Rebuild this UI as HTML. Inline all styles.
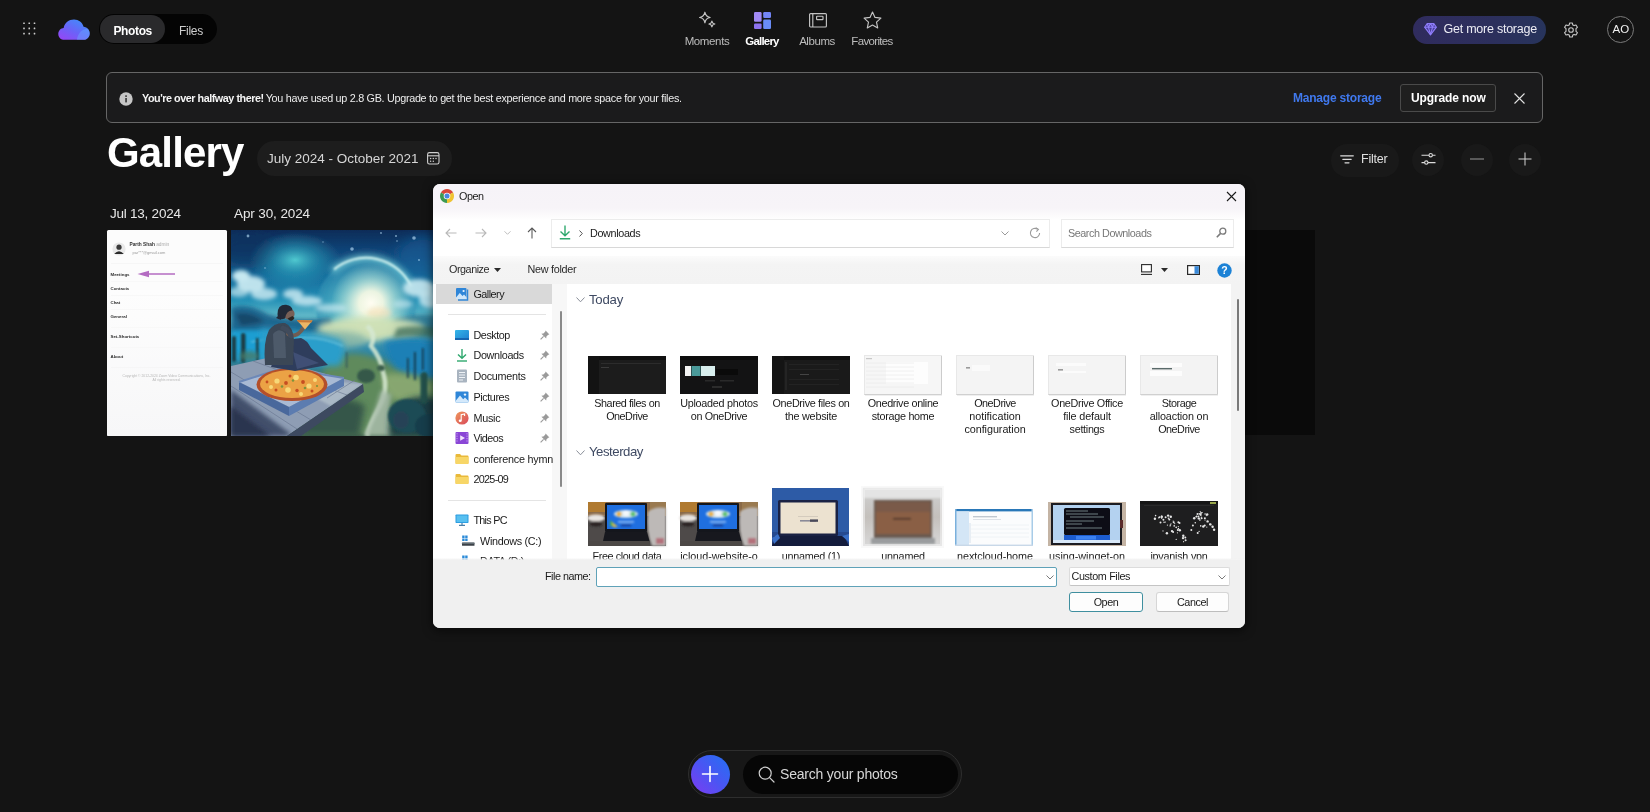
<!DOCTYPE html>
<html lang="en">
<head>
<meta charset="utf-8">
<title>Gallery - OneDrive</title>
<style>
*{box-sizing:border-box;margin:0;padding:0}
html,body{width:1650px;height:812px;overflow:hidden;background:#141414}
body{position:relative;will-change:transform;font-family:"Liberation Sans",sans-serif;color:#fff;-webkit-font-smoothing:antialiased}
.abs{position:absolute}
.t{position:absolute;white-space:nowrap;line-height:1}
svg{position:absolute;overflow:visible}
/* header */
#pill{left:99px;top:14px;width:118.4px;height:30px;border-radius:15px;background:#040404}
#pill .on{left:1.2px;top:1.2px;width:64.4px;height:27.6px;border-radius:14px;background:#2a2a2c}
.nav{font-size:11.5px;color:#bdbdbd;text-align:center;width:80px}
#gms{left:1413px;top:15.5px;width:133px;height:28px;border-radius:14px;background:linear-gradient(90deg,#302c5e,#2c2f5c 60%,#27345c)}
#avatar{left:1607.3px;top:15.7px;width:27px;height:27px;border-radius:50%;border:1.3px solid #7a7a7a}
/* banner */
#banner{left:106px;top:72px;width:1437px;height:51px;border:1px solid #666;border-radius:6px;background:#1b1b1c}
#upg{left:1400px;top:83.5px;width:96px;height:28px;border:1px solid #4a4a4a;border-radius:3px;background:#1f1f1f}
/* gallery */
#datepill{left:256.5px;top:141px;width:195.5px;height:35px;border-radius:17.5px;background:#1d1d1d}
.rb{border-radius:16px;background:#191919}

/* dialog */
#dlg{font-size:11px;color:#1a1a1a}
#dlg .t{color:#1a1a1a}
#dlg .d{font-size:11px}
.box{position:absolute;border:1px solid #e2e2e2;background:#fff}
.lbl{position:absolute;text-align:center;font-size:10.8px;line-height:13px;color:#1a1a1a;width:92px;white-space:nowrap}
.sb{position:absolute;left:40.5px;font-size:10.8px;line-height:1;white-space:nowrap;color:#1a1a1a}
.th{position:absolute;overflow:hidden}
</style>
</head>
<body>

<!-- ===== HEADER ===== -->
<svg class="abs" style="left:22px;top:21px" width="15" height="15" viewBox="0 0 15 15" fill="#cdcdcd"><rect x="1.2" y="1.4000000000000001" width="1.6" height="1.6" rx=".3"/><rect x="6.45" y="1.4000000000000001" width="1.6" height="1.6" rx=".3"/><rect x="11.7" y="1.4000000000000001" width="1.6" height="1.6" rx=".3"/><rect x="1.2" y="6.6000000000000005" width="1.6" height="1.6" rx=".3"/><rect x="6.45" y="6.6000000000000005" width="1.6" height="1.6" rx=".3"/><rect x="11.7" y="6.6000000000000005" width="1.6" height="1.6" rx=".3"/><rect x="1.2" y="11.799999999999999" width="1.6" height="1.6" rx=".3"/><rect x="6.45" y="11.799999999999999" width="1.6" height="1.6" rx=".3"/><rect x="11.7" y="11.799999999999999" width="1.6" height="1.6" rx=".3"/></svg>
<svg class="abs" style="left:57.5px;top:18.8px" width="32" height="21.4" viewBox="0 0 34 22">
<defs><linearGradient id="cl" x1="0.1" y1="1" x2="0.9" y2="0"><stop offset="0" stop-color="#9646f5"/><stop offset=".45" stop-color="#6a63f8"/><stop offset="1" stop-color="#3b93fa"/></linearGradient></defs>
<path d="M7 21.8 C3 21.8 0.3 19 0.3 15.5 C0.3 12 3 9.4 6 9.2 C7 4 11.5 0.3 17 0.3 C22 0.3 26 3.4 27.2 8 C31 8.4 33.7 11.4 33.7 15 C33.7 18.8 30.8 21.8 27 21.8 Z" fill="url(#cl)"/>
<path d="M20 21.8 C21 15 25 10.5 31.5 10 C33 11.4 33.7 13 33.7 15 C33.7 18.8 30.8 21.8 27 21.8 Z" fill="#6aa8ff" opacity=".45"/>
</svg>
<div class="abs" id="pill"><div class="abs on"></div></div>
<div class="t" style="left:113.5px;top:24.7px;font-size:12px;font-weight:bold;color:#fff"><span class="f" style="letter-spacing:-0.379px">Photos</span></div>
<div class="t" style="left:179px;top:24.7px;font-size:12px;color:#cdcdcd"><span class="f" style="letter-spacing:-0.269px">Files</span></div>

<div class="t nav" style="left:667px;top:35.7px"><span class="f" style="letter-spacing:-0.371px">Moments</span></div>
<div class="t nav" style="left:722px;top:35.7px;color:#fff;font-weight:bold"><span class="f" style="letter-spacing:-0.814px">Gallery</span></div>
<div class="t nav" style="left:777px;top:35.7px"><span class="f" style="letter-spacing:-0.443px">Albums</span></div>
<div class="t nav" style="left:832px;top:35.7px"><span class="f" style="letter-spacing:-0.666px">Favorites</span></div>

<div class="abs" id="gms"></div>
<div class="t" style="left:1443.5px;top:23.4px;font-size:12.5px;color:#ececf4"><span class="f" style="letter-spacing:-0.242px">Get more storage</span></div>
<div class="abs" id="avatar"></div>
<div class="t" style="left:1611.3px;top:24px;font-size:11.5px;color:#f0f0f0;width:19px;text-align:center">AO</div>

<!-- ===== BANNER ===== -->
<div class="abs" id="banner"></div>
<div class="t" style="left:142px;top:93px;font-size:10.8px;color:#f4f4f4;font-weight:bold"><span class="f" style="letter-spacing:-0.469px">You're over halfway there!</span></div>
<div class="t" style="left:265.7px;top:93px;font-size:10.8px;color:#ededed"><span class="f" style="letter-spacing:-0.295px">You have used up 2.8 GB. Upgrade to get the best experience and more space for your files.</span></div>
<div class="t" style="left:1293px;top:92px;font-size:12px;font-weight:bold;color:#4079ee"><span class="f" style="letter-spacing:-0.211px">Manage storage</span></div>
<div class="abs" id="upg"></div>
<div class="t" style="left:1411px;top:92px;font-size:12px;font-weight:bold;color:#fff"><span class="f" style="letter-spacing:-0.120px">Upgrade now</span></div>

<!-- ===== GALLERY HEAD ===== -->
<div class="t" style="left:107px;top:131.9px;font-size:42px;font-weight:bold;color:#fff"><span class="f" style="letter-spacing:-0.848px">Gallery</span></div>
<div class="abs" id="datepill"></div>
<div class="t" style="left:267px;top:152px;font-size:13.5px;color:#d6d6d6"><span class="f" style="letter-spacing:0.000px">July 2024 - October 2021</span></div>
<div class="abs rb" style="left:1331px;top:143.5px;width:68px;height:33px"></div>
<div class="t" style="left:1361px;top:153px;font-size:12.5px;color:#e0e0e0"><span class="f" style="letter-spacing:-0.230px">Filter</span></div>
<div class="abs rb" style="left:1412px;top:143.5px;width:32px;height:32px"></div>
<div class="abs rb" style="left:1461px;top:143.5px;width:32px;height:32px"></div>
<div class="abs rb" style="left:1508.5px;top:143.5px;width:32px;height:32px"></div>

<div class="t" style="left:110px;top:206.5px;font-size:13.5px;color:#e8e8e8"><span class="f" style="letter-spacing:-0.239px">Jul 13, 2024</span></div>
<div class="t" style="left:234px;top:206.5px;font-size:13.5px;color:#e8e8e8"><span class="f" style="letter-spacing:-0.109px">Apr 30, 2024</span></div>

<!-- PHOTOS -->
<div class="abs" id="ph1" style="left:106.5px;top:229.5px;width:120px;height:206px;background:#fcfcfc;border-radius:1.5px;overflow:hidden;font-size:4.6px;color:#555">
<div class="abs" style="left:0;top:60px;width:120px;height:146px;background:linear-gradient(#fdfdfd,#f7f7f8)"></div>
<svg style="left:5px;top:12px" width="14" height="14" viewBox="0 0 14 14"><circle cx="7" cy="7" r="6.6" fill="#e9e9e9"/><circle cx="7" cy="5.2" r="2.6" fill="#3a3a3a"/><path d="M2.2 12 Q7 6.4 11.8 12 Z" fill="#2a2a2a"/></svg>
<div class="t" style="left:23px;top:13.0px;font-size:4.8px;color:#333;font-weight:bold">Parth Shah <span style="font-weight:normal;color:#aaa">admin</span></div>
<div class="t" style="left:26px;top:21.0px;font-size:4px;color:#9a9a9a">par***@gmail.com</div>
<div class="abs" style="left:4px;top:33px;width:112px;height:1px;background:#f6f6f6"></div>
<div class="t" style="left:4px;top:43.0px;color:#2c2c2c;font-weight:bold;font-size:4.4px">Meetings</div>
<svg style="left:30px;top:40px" width="39" height="8" viewBox="0 0 39 8"><path d="M8 4 H38" stroke="#b46cc2" stroke-width="1.5"/><path d="M0.5 4 L12 0.8 V7.2 Z" fill="#b46cc2"/></svg>
<div class="t" style="left:4px;top:57.0px;color:#2c2c2c;font-weight:bold;font-size:4.4px">Contacts</div>
<div class="t" style="left:4px;top:71.0px;color:#2c2c2c;font-weight:bold;font-size:4.4px">Chat</div>
<div class="t" style="left:4px;top:85.0px;color:#2c2c2c;font-weight:bold;font-size:4.4px">General</div>
<div class="t" style="left:4px;top:105.0px;color:#2c2c2c;font-weight:bold;font-size:4.4px">Set-Shortcuts</div>
<div class="t" style="left:4px;top:125.0px;color:#2c2c2c;font-weight:bold;font-size:4.4px">About</div>
<div class="abs" style="left:4px;top:51px;width:112px;height:1px;background:#f8f8f8"></div>
<div class="abs" style="left:4px;top:65px;width:112px;height:1px;background:#f8f8f8"></div>
<div class="abs" style="left:4px;top:79px;width:112px;height:1px;background:#f8f8f8"></div>
<div class="abs" style="left:4px;top:97px;width:112px;height:1px;background:#f8f8f8"></div>
<div class="abs" style="left:4px;top:117px;width:112px;height:1px;background:#f8f8f8"></div>
<div class="abs" style="left:4px;top:137px;width:112px;height:1px;background:#f6f6f6"></div>
<div class="t" style="left:8px;top:145.0px;font-size:3.4px;color:#b8b8b8;width:104px;text-align:center">Copyright © 2012-2024 Zoom Video Communications, Inc.</div>
<div class="t" style="left:8px;top:149.5px;font-size:3.4px;color:#b8b8b8;width:104px;text-align:center">All rights reserved.</div>
</div>
<div class="abs" id="ph2" style="left:231px;top:229.5px;width:210px;height:206px;background:#1d5f80;overflow:hidden">
<svg style="left:0;top:0" width="210" height="206" viewBox="0 0 210 206">
<defs>
<linearGradient id="sky" x1="0" y1="0" x2="0" y2="1"><stop offset="0" stop-color="#0e2c58"/><stop offset=".1" stop-color="#104478"/><stop offset=".22" stop-color="#15699a"/><stop offset=".34" stop-color="#2390b6"/><stop offset=".43" stop-color="#6cc0cc"/><stop offset=".5" stop-color="#4a9ab0"/><stop offset=".6" stop-color="#2c86a8"/><stop offset=".75" stop-color="#3a6a68"/><stop offset="1" stop-color="#22383c"/></linearGradient>
<radialGradient id="glow1"><stop offset="0" stop-color="#56d6d8" stop-opacity=".9"/><stop offset=".5" stop-color="#2ea8c0" stop-opacity=".5"/><stop offset="1" stop-color="#2aa0b8" stop-opacity="0"/></radialGradient>
<radialGradient id="sun"><stop offset="0" stop-color="#fffdf2"/><stop offset=".3" stop-color="#f6f9e4" stop-opacity=".92"/><stop offset=".65" stop-color="#cfeedd" stop-opacity=".45"/><stop offset="1" stop-color="#c8ecdc" stop-opacity="0"/></radialGradient>
<radialGradient id="planet" cx=".5" cy=".55" r=".55"><stop offset="0" stop-color="#d4f0e0" stop-opacity=".9"/><stop offset=".55" stop-color="#58b4c4" stop-opacity=".75"/><stop offset="1" stop-color="#2c8cb2" stop-opacity=".6"/></radialGradient>
<filter id="f1" x="-20%" y="-20%" width="140%" height="140%"><feGaussianBlur stdDeviation="1.1"/></filter>
<filter id="f2" x="-30%" y="-30%" width="160%" height="160%"><feGaussianBlur stdDeviation="2"/></filter>
<filter id="f3" x="-30%" y="-30%" width="160%" height="160%"><feGaussianBlur stdDeviation="3"/></filter>
<filter id="f6" x="-40%" y="-40%" width="180%" height="180%"><feGaussianBlur stdDeviation="6"/></filter>
<filter id="f05"><feGaussianBlur stdDeviation="0.6"/></filter>
<clipPath id="hz"><rect x="0" y="0" width="210" height="92"/></clipPath>
</defs>
<g filter="url(#f05)">
<rect width="210" height="206" fill="url(#sky)"/>
<ellipse cx="16" cy="22" rx="30" ry="16" fill="#0c2a54" opacity=".55" filter="url(#f6)"/>
<ellipse cx="64" cy="30" rx="46" ry="28" fill="url(#glow1)"/>
<ellipse cx="192" cy="26" rx="26" ry="20" fill="#15609a" opacity=".55" filter="url(#f6)"/>
<g fill="#bfe6ff" opacity=".6" filter="url(#f05)"><circle cx="17" cy="6" r="1.4"/><circle cx="121" cy="19" r="1.8"/><circle cx="183" cy="8" r="1.8"/><circle cx="165" cy="6" r="1"/><circle cx="150" cy="3" r=".9"/><circle cx="166" cy="11" r=".8"/><circle cx="188" cy="30" r=".9"/><circle cx="34" cy="38" r=".8"/><circle cx="92" cy="12" r=".7"/></g>
<g clip-path="url(#hz)">
<circle cx="135" cy="78" r="50" fill="url(#planet)" filter="url(#f1)"/>
<path d="M101 41.5 A50 50 0 0 1 181 58" fill="none" stroke="#8fe4e4" stroke-width="7" filter="url(#f3)" opacity=".65"/>
<path d="M103 39.5 A50 50 0 0 1 180 56" fill="none" stroke="#e0fcf6" stroke-width="2" filter="url(#f1)"/>
</g>
<circle cx="140" cy="73" r="40" fill="url(#sun)"/>
<ellipse cx="148" cy="83" rx="12" ry="6" fill="#f8e0b8" opacity=".6" filter="url(#f2)"/>
<g filter="url(#f2)" fill="#c6e8f0">
<ellipse cx="10" cy="46" rx="9" ry="6"/><ellipse cx="20" cy="54" rx="14" ry="8" opacity=".95"/><ellipse cx="33" cy="64" rx="13" ry="6" opacity=".85"/><ellipse cx="8" cy="62" rx="10" ry="5" opacity=".7"/>
<ellipse cx="62" cy="64" rx="10" ry="5" opacity=".85"/><ellipse cx="76" cy="71" rx="15" ry="5" opacity=".85"/><ellipse cx="100" cy="78" rx="16" ry="4" opacity=".7"/>
<ellipse cx="188" cy="58" rx="16" ry="9" opacity=".9"/><ellipse cx="200" cy="70" rx="12" ry="8" opacity=".85"/><ellipse cx="172" cy="74" rx="10" ry="4" opacity=".6"/>
</g>
<g filter="url(#f2)"><path d="M0 78 Q16 72 36 84 Q60 92 100 88 L104 104 L0 104 Z" fill="#1a5e8a" opacity=".9"/><path d="M4 84 Q20 80 34 92 L10 96 Z" fill="#123e60" opacity=".8"/><path d="M164 90 Q186 82 210 86 V104 H154 Z" fill="#1f6a8a" opacity=".8"/></g>
<ellipse cx="140" cy="99" rx="54" ry="12" fill="#d2e2b6" filter="url(#f3)" opacity=".95"/>
<ellipse cx="106" cy="110" rx="30" ry="9" fill="#8ab8a8" filter="url(#f3)" opacity=".85"/>
<path d="M0 100 H34 Q46 110 44 130 H0 Z" fill="#1f9ed2" filter="url(#f2)"/><path d="M20 112 Q60 104 104 118" fill="none" stroke="#7cd0e4" stroke-width="1.500" opacity=".6" filter="url(#f1)"/>
<path d="M152 112 Q178 104 210 112 V148 Q184 152 162 140 Z" fill="#1a80b6" filter="url(#f3)"/>
<path d="M166 98 Q186 94 206 98 L204 108 Q182 104 162 108 Z" fill="#3a6a58" filter="url(#f2)" opacity=".75"/>
<path d="M98 126 Q140 116 168 142 Q196 150 210 150 V206 H66 Z" fill="#5e8a5c" filter="url(#f3)"/><path d="M30 98 Q80 100 110 110 Q118 122 108 136 H30 Z" fill="#2a9ecb" filter="url(#f3)"/><path d="M66 108 Q90 106 112 116" fill="none" stroke="#8ad8e8" stroke-width="1.500" opacity=".55" filter="url(#f1)"/>
<path d="M150 146 Q176 138 200 156 Q196 176 168 172 Q152 164 150 146 Z" fill="#8caa72" filter="url(#f3)" opacity=".9"/>
<path d="M76 176 Q110 160 134 176 L128 206 H70 Z" fill="#36564a" filter="url(#f3)"/>
<path d="M136 96 Q146 104 140 116 Q150 128 152 142 Q158 160 148 178 Q138 196 136 206" fill="none" stroke="#d6e8d2" stroke-width="4.5" filter="url(#f1)" opacity=".85"/>
<path d="M150 160 Q142 190 132 206 H160 Q158 186 160 164 Z" fill="#a8bcaa" filter="url(#f2)" opacity=".85"/>
<path d="M160 180 Q182 160 210 170 V206 H158 Z" fill="#1e3c44" filter="url(#f3)"/>
<g filter="url(#f1)"><ellipse cx="135" cy="146" rx="9" ry="7" fill="#34584a"/><ellipse cx="150" cy="138" rx="4" ry="3" fill="#3a5e4c"/><ellipse cx="176" cy="186" rx="19" ry="17" fill="#1d4c54"/><ellipse cx="198" cy="196" rx="14" ry="12" fill="#183e4c"/><ellipse cx="170" cy="190" rx="8" ry="9" fill="#2a4058" opacity=".7"/><rect x="189.500" y="142" width="7" height="32" rx="3.5" fill="#21504c"/><rect x="115" y="122" width="1.200" height="16" fill="#2a4a58"/><rect x="176" y="128" width="1.600" height="20" fill="#1a3a4c"/><rect x="183" y="122" width="1.800" height="28" fill="#1a3a4c"/><rect x="191" y="118" width="1.600" height="22" fill="#16324a"/></g>
<g fill="#1c3e44" filter="url(#f1)"><rect x="1" y="106" width="4" height="26" rx="2"/><rect x="10" y="103" width="4.500" height="30" rx="2"/><rect x="25" y="108" width="2.500" height="24"/></g>
<ellipse cx="18" cy="126" rx="10" ry="5" fill="#4a7a68" filter="url(#f2)" opacity=".8"/>
<path d="M0 136 L36 128 L132 154 L56 206 H0 Z" fill="#8e9db4"/>
<path d="M84 150 L132 154 L100 176 L70 160 Z" fill="#b4c2cc" opacity=".75" filter="url(#f1)"/>
<path d="M0 142 L80 190 M0 156 L66 199 M22 131 L116 165 M96 168 L124 150" stroke="#66748e" stroke-width="1" opacity=".6"/>
<path d="M0 160 L60 204 L56 206 H0 Z" fill="#34425e" opacity=".85" filter="url(#f2)"/>
<path d="M0 176 L40 206 H0 Z" fill="#2a3650" filter="url(#f2)"/>
<path d="M56 206 L132 154 L133 162 L70 206 Z" fill="#3c4a60"/>
<path d="M8 152 L52 138 L113 148 L58 177 Z" fill="#a9bad4"/>
<path d="M8 152 L58 177 V186 L8 160 Z" fill="#4a689c"/>
<path d="M58 177 L113 148 V156 L58 186 Z" fill="#5c7cb0"/>
<path d="M8 152 L52 138 L113 148" fill="none" stroke="#6c88b8" stroke-width="2"/>
<ellipse cx="61" cy="154.500" rx="35.500" ry="16.500" fill="#b4502a"/>
<ellipse cx="61" cy="154" rx="32" ry="14" fill="#eba244"/>
<g filter="url(#f05)"><g fill="#f7d878"><circle cx="46" cy="151" r="2.600"/><circle cx="65" cy="147.500" r="2.800"/><circle cx="78" cy="156" r="2.600"/><circle cx="57" cy="160" r="2.800"/><circle cx="84" cy="150" r="2"/><circle cx="40" cy="157" r="2"/><circle cx="70" cy="164" r="2"/></g><g fill="#c64e20"><circle cx="55" cy="153" r="1.900"/><circle cx="72" cy="152" r="1.900"/><circle cx="66" cy="160.500" r="1.700"/><circle cx="45" cy="160" r="1.500"/><circle cx="81" cy="161" r="1.500"/><circle cx="59" cy="146" r="1.500"/><circle cx="36" cy="152" r="1.400"/></g><g fill="#7c943a"><circle cx="51" cy="156.500" r="1.300"/><circle cx="74" cy="158" r="1.300"/><circle cx="62" cy="150.500" r="1.200"/><circle cx="86" cy="156" r="1.100"/></g></g>
<g filter="url(#f05)">
<path d="M46 120 Q58 108 70 108 Q76 110 80 118 L97 135 L64 141 L40 137 Z" fill="#2f3d5c"/>
<path d="M62 122 L88 133 L66 139 Z" fill="#44557a" opacity=".8"/>
<path d="M34 135 Q32 112 38 100 Q44 92 54 93 Q62 96 63 110 L62 135 Z" fill="#3a4656"/>
<path d="M42 104 Q48 97 54 103 L55 128 L43 128 Z" fill="#5a6878" opacity=".6"/>
<path d="M57 104 Q64 108 70 101 L73 97" fill="none" stroke="#705c52" stroke-width="3.800" stroke-linecap="round"/>
<path d="M52 98 Q58 100 60 106" fill="none" stroke="#3f4b5b" stroke-width="5" stroke-linecap="round"/>
<circle cx="58" cy="84" r="5.600" fill="#786056"/>
<path d="M46.500 84 Q46.500 74.500 55 74.800 Q61.500 76 61.500 80.500 Q55.500 80 54 88.500 Q46.500 91 46.500 84 Z" fill="#232938"/>
<path d="M45 88 L49 84 L50 90 Z" fill="#232938"/>
<path d="M56.500 88.500 Q60.500 93.500 63.500 88 L61.500 86 Z" fill="#2c2622"/>
<path d="M66 90 L81.500 90.500 L74 99.500 Z" fill="#ecb566"/><path d="M66 90 L81.500 90.500 L80.500 92.600 L67.200 92.200 Z" fill="#c87a38"/>
</g>
</g>
</svg>
</div>
<div class="abs" style="left:1240px;top:230px;width:75px;height:205px;background:#0a0a0a"></div>

<!-- DIALOG -->
<div class="abs" id="dlg" style="left:433px;top:184px;width:812px;height:444px;background:#fff;border-radius:7px;overflow:hidden;box-shadow:0 2px 10px 1px rgba(0,0,0,.55)">
<!--DLG-TITLE-->
<div class="abs" style="left:0;top:0;width:812px;height:36px;background:linear-gradient(#f6f3f8 0,#f7f4f8 24px,#fdfcfd 33px,#fff 36px)"></div>
<svg style="left:7px;top:5px" width="14" height="14" viewBox="0 0 14 14">
<circle cx="7" cy="7" r="7" fill="#e8ebe6"/>
<path d="M7 7 L0.94 3.5 A7 7 0 0 1 13.06 3.5 Z" fill="#d9473a"/>
<path d="M7 7 L13.06 3.5 A7 7 0 0 1 7 14 Z" fill="#f0c330"/>
<path d="M7 7 L7 14 A7 7 0 0 1 0.94 3.5 Z" fill="#3c9a52"/>
<circle cx="7" cy="7" r="3.3" fill="#f4f4f4"/>
<circle cx="7" cy="7" r="2.5" fill="#4a86e0"/>
</svg>
<div class="t" style="left:26px;top:7px;font-size:10.8px"><span class="f" style="letter-spacing:-0.430px">Open</span></div>
<svg style="left:793.5px;top:7.5px" width="9" height="9" viewBox="0 0 9 9"><path d="M0 0 L9 9 M9 0 L0 9" stroke="#1a1a1a" stroke-width="1.1" fill="none"/></svg>
<!--DLG-NAV-->
<svg style="left:12px;top:44px" width="12" height="10" viewBox="0 0 12 10"><path d="M11.5 5 H1 M5 1 L1 5 L5 9" stroke="#b9b9b9" stroke-width="1.1" fill="none"/></svg>
<svg style="left:42px;top:44px" width="12" height="10" viewBox="0 0 12 10"><path d="M0.5 5 H11 M7 1 L11 5 L7 9" stroke="#b9b9b9" stroke-width="1.1" fill="none"/></svg>
<svg style="left:70.5px;top:47px" width="7" height="4" viewBox="0 0 7 4"><path d="M0.5 0.3 L3.5 3.3 L6.5 0.3" stroke="#bdbdbd" stroke-width="1" fill="none"/></svg>
<svg style="left:94px;top:43px" width="10" height="12" viewBox="0 0 10 12"><path d="M5 11.5 V1 M1 5 L5 1 L9 5" stroke="#5a5a5a" stroke-width="1.1" fill="none"/></svg>
<div class="box" style="left:117.5px;top:34.5px;width:499px;height:29px;border-color:#ececec;border-bottom-color:#d8d8d8"></div>
<svg style="left:126px;top:41px" width="12" height="15" viewBox="0 0 12 15"><path d="M6 0.5 V10.5 M1.5 6.5 L6 10.8 L10.5 6.5" stroke="#2fa86e" stroke-width="1.4" fill="none"/><path d="M0.8 13.8 H11.2" stroke="#2fa86e" stroke-width="1.4"/></svg>
<svg style="left:145.5px;top:45.5px" width="4" height="7" viewBox="0 0 4 7"><path d="M0.5 0.5 L3.3 3.5 L0.5 6.5" stroke="#555" stroke-width="1" fill="none"/></svg>
<div class="t" style="left:157px;top:43.5px;font-size:10.8px"><span class="f" style="letter-spacing:-0.347px">Downloads</span></div>
<svg style="left:568px;top:46.5px" width="8" height="5" viewBox="0 0 8 5"><path d="M0.5 0.5 L4 4 L7.5 0.5" stroke="#9a9a9a" stroke-width="1" fill="none"/></svg>
<svg style="left:596px;top:43px" width="12" height="12" viewBox="0 0 12 12"><path d="M10.6 6 A4.6 4.6 0 1 1 8.6 2.2" stroke="#9a9a9a" stroke-width="1.1" fill="none"/><path d="M6.8 0.6 L9.4 2.4 L7.4 4.6" stroke="#9a9a9a" stroke-width="1.1" fill="none"/></svg>
<div class="abs" style="left:616px;top:38px;width:1px;height:22px;background:#ececec"></div>
<div class="box" style="left:627.5px;top:34.5px;width:173px;height:29px;border-color:#ececec;border-bottom-color:#d8d8d8"></div>
<div class="t" style="left:635px;top:43.5px;font-size:10.8px;color:#777"><span class="f" style="letter-spacing:-0.452px">Search Downloads</span></div>
<svg style="left:783px;top:43px" width="11" height="11" viewBox="0 0 11 11"><circle cx="6.8" cy="4.2" r="3" stroke="#7a7a7a" stroke-width="1.3" fill="none"/><path d="M4.6 6.4 L0.8 10.2" stroke="#7a7a7a" stroke-width="1.6"/></svg>
<!--DLG-TOOLBAR-->
<div class="abs" style="left:0;top:72px;width:812px;height:28px;background:linear-gradient(#fbfbfb,#f4f4f4 30%,#f3f3f3)"></div>
<div class="t" style="left:16px;top:80px;font-size:10.8px;color:#2a2a2a"><span class="f" style="letter-spacing:-0.464px">Organize</span></div>
<svg style="left:61px;top:83.5px" width="7" height="4" viewBox="0 0 7 4"><path d="M0 0 H7 L3.5 4 Z" fill="#2a2a2a"/></svg>
<div class="t" style="left:94.5px;top:80px;font-size:10.8px;color:#2a2a2a"><span class="f" style="letter-spacing:-0.281px">New folder</span></div>
<svg style="left:708px;top:80px" width="11" height="11" viewBox="0 0 11 11"><rect x="0.6" y="0.6" width="9.8" height="7.3" stroke="#2a2a2a" stroke-width="1.1" fill="#fff"/><path d="M0 10.4 H11" stroke="#2a2a2a" stroke-width="1.1"/></svg>
<svg style="left:728px;top:83.5px" width="7" height="4" viewBox="0 0 7 4"><path d="M0 0 H7 L3.5 4 Z" fill="#2a2a2a"/></svg>
<svg style="left:754px;top:80.5px" width="13" height="10" viewBox="0 0 13 10"><rect x="0.6" y="0.6" width="11.8" height="8.8" stroke="#2a2a2a" stroke-width="1.2" fill="#fff"/><rect x="7.5" y="1.2" width="4.3" height="7.6" fill="#3b8ad9"/></svg>
<svg style="left:784px;top:78.5px" width="15" height="15" viewBox="0 0 15 15"><circle cx="7.5" cy="7.5" r="7.2" fill="#1c82d6"/><text x="7.5" y="11.3" text-anchor="middle" font-family="Liberation Sans,sans-serif" font-weight="bold" font-size="10.5" fill="#fff">?</text></svg>
<!--DLG-SIDEBAR-->
<div class="abs" style="left:3px;top:100px;width:116px;height:20px;background:#d9d9d9"></div>
<div class="abs" style="left:15px;top:130px;width:98px;height:1px;background:#e4e4e4"></div>
<div class="abs" style="left:15px;top:316px;width:98px;height:1px;background:#e4e4e4"></div>
<div class="abs" style="left:119px;top:100px;width:15px;height:275px;background:#f7f7f7"></div>
<div class="abs" style="left:126.5px;top:127px;width:2px;height:176px;background:#8a8a8a;border-radius:1px"></div>
<svg style="left:22px;top:102.5px" width="14" height="14" viewBox="0 0 14 14"><rect x="1" y="1" width="10.5" height="11" rx="1" fill="#2f86d8"/><path d="M1 10.5 L4.8 6 L7.5 9 L9 7.6 L11.5 10.2 V12 H1 Z" fill="#cfe6fa"/><circle cx="8.6" cy="4" r="1.1" fill="#e8f3fd"/><path d="M12.6 2.5 V13 H3" stroke="#2f86d8" stroke-width="1.3" fill="none"/></svg>
<div class="sb" style="left:40.5px;top:104.5px"><span class="f" style="letter-spacing:-0.529px">Gallery</span></div>
<svg style="left:22px;top:144px" width="14" height="14" viewBox="0 0 14 14"><defs><linearGradient id="dk" x1="0" y1="0" x2="1" y2="1"><stop offset="0" stop-color="#35b6e8"/><stop offset="1" stop-color="#1e7fd0"/></linearGradient></defs><rect x="0" y="2" width="14" height="10" rx="1" fill="url(#dk)"/><rect x="0" y="10" width="14" height="2" fill="#1765b0"/></svg>
<div class="sb" style="left:40.5px;top:146.0px"><span class="f" style="letter-spacing:-0.458px">Desktop</span></div>
<svg style="left:107px;top:146px" width="10" height="10" viewBox="0 0 10 10"><path d="M5.6 0.6 L9.4 4.4 L8.2 4.8 L6.4 6.6 L6.2 8.6 L1.4 3.8 L3.4 3.6 L5.2 1.8 Z" fill="#9a9a9a"/><path d="M3.6 6.4 L0.6 9.4" stroke="#9a9a9a" stroke-width="1.1"/></svg>
<svg style="left:22px;top:164.4px" width="14" height="14" viewBox="0 0 14 14"><path d="M7 1 V10 M3 6.4 L7 10.3 L11 6.4" stroke="#2fa86e" stroke-width="1.4" fill="none"/><path d="M2 13 H12" stroke="#2fa86e" stroke-width="1.4"/></svg>
<div class="sb" style="left:40.5px;top:166.4px"><span class="f" style="letter-spacing:-0.347px">Downloads</span></div>
<svg style="left:107px;top:166.4px" width="10" height="10" viewBox="0 0 10 10"><path d="M5.6 0.6 L9.4 4.4 L8.2 4.8 L6.4 6.6 L6.2 8.6 L1.4 3.8 L3.4 3.6 L5.2 1.8 Z" fill="#9a9a9a"/><path d="M3.6 6.4 L0.6 9.4" stroke="#9a9a9a" stroke-width="1.1"/></svg>
<svg style="left:22px;top:185px" width="14" height="14" viewBox="0 0 14 14"><rect x="2" y="0.5" width="10" height="13" rx="1" fill="#a9b4c0"/><path d="M4 3.5 H10 M4 6 H10 M4 8.5 H10 M4 11 H8" stroke="#eef2f6" stroke-width="1"/></svg>
<div class="sb" style="left:40.5px;top:187.0px"><span class="f" style="letter-spacing:-0.279px">Documents</span></div>
<svg style="left:107px;top:187px" width="10" height="10" viewBox="0 0 10 10"><path d="M5.6 0.6 L9.4 4.4 L8.2 4.8 L6.4 6.6 L6.2 8.6 L1.4 3.8 L3.4 3.6 L5.2 1.8 Z" fill="#9a9a9a"/><path d="M3.6 6.4 L0.6 9.4" stroke="#9a9a9a" stroke-width="1.1"/></svg>
<svg style="left:22px;top:205.8px" width="14" height="14" viewBox="0 0 14 14"><rect x="0.5" y="1.5" width="13" height="11" rx="1" fill="#2f86d8"/><path d="M0.5 11 L5 5.6 L8.2 9.2 L10 7.6 L13.5 11 V12.5 H0.5 Z" fill="#d4e9fb"/><circle cx="10" cy="4.6" r="1.2" fill="#e8f3fd"/></svg>
<div class="sb" style="left:40.5px;top:207.8px"><span class="f" style="letter-spacing:-0.414px">Pictures</span></div>
<svg style="left:107px;top:207.8px" width="10" height="10" viewBox="0 0 10 10"><path d="M5.6 0.6 L9.4 4.4 L8.2 4.8 L6.4 6.6 L6.2 8.6 L1.4 3.8 L3.4 3.6 L5.2 1.8 Z" fill="#9a9a9a"/><path d="M3.6 6.4 L0.6 9.4" stroke="#9a9a9a" stroke-width="1.1"/></svg>
<svg style="left:22px;top:226.5px" width="14" height="14" viewBox="0 0 14 14"><defs><linearGradient id="mu" x1="0" y1="0" x2="1" y2="1"><stop offset="0" stop-color="#f09a5c"/><stop offset="1" stop-color="#d8475a"/></linearGradient></defs><circle cx="7" cy="7" r="6.6" fill="url(#mu)"/><path d="M6.2 9.6 V3.8 L9.6 3 V5" stroke="#fff" stroke-width="1.1" fill="none"/><ellipse cx="5.2" cy="9.7" rx="1.5" ry="1.2" fill="#fff"/></svg>
<div class="sb" style="left:40.5px;top:228.5px"><span class="f" style="letter-spacing:-0.281px">Music</span></div>
<svg style="left:107px;top:228.5px" width="10" height="10" viewBox="0 0 10 10"><path d="M5.6 0.6 L9.4 4.4 L8.2 4.8 L6.4 6.6 L6.2 8.6 L1.4 3.8 L3.4 3.6 L5.2 1.8 Z" fill="#9a9a9a"/><path d="M3.6 6.4 L0.6 9.4" stroke="#9a9a9a" stroke-width="1.1"/></svg>
<svg style="left:22px;top:246.9px" width="14" height="14" viewBox="0 0 14 14"><rect x="0.5" y="1" width="13" height="12" rx="1" fill="#8a46d6"/><path d="M5.2 4.2 L10 7 L5.2 9.8 Z" fill="#f0e4fb"/><path d="M2 2.2 V11.8 M12 2.2 V11.8" stroke="#c7a2f0" stroke-width="1" stroke-dasharray="1.2 1.2"/></svg>
<div class="sb" style="left:40.5px;top:248.9px"><span class="f" style="letter-spacing:-0.538px">Videos</span></div>
<svg style="left:107px;top:248.9px" width="10" height="10" viewBox="0 0 10 10"><path d="M5.6 0.6 L9.4 4.4 L8.2 4.8 L6.4 6.6 L6.2 8.6 L1.4 3.8 L3.4 3.6 L5.2 1.8 Z" fill="#9a9a9a"/><path d="M3.6 6.4 L0.6 9.4" stroke="#9a9a9a" stroke-width="1.1"/></svg>
<div class="abs" style="left:0;top:264px;width:121px;height:22px;overflow:hidden"><svg style="left:22px;top:3.6px" width="14" height="14" viewBox="0 0 14 14"><path d="M0.5 3 Q0.5 2 1.5 2 H5 L6.5 3.5 H12.5 Q13.5 3.5 13.5 4.5 V11 Q13.5 12 12.5 12 H1.5 Q0.5 12 0.5 11 Z" fill="#e9b93a"/><path d="M0.5 5 H13.5 V11 Q13.5 12 12.5 12 H1.5 Q0.5 12 0.5 11 Z" fill="#f7d667"/></svg>
<div class="sb" style="left:40.5px;top:5.6px"><span class="f" style="letter-spacing:-0.215px">conference hymn</span></div>
</div>
<svg style="left:22px;top:287.9px" width="14" height="14" viewBox="0 0 14 14"><path d="M0.5 3 Q0.5 2 1.5 2 H5 L6.5 3.5 H12.5 Q13.5 3.5 13.5 4.5 V11 Q13.5 12 12.5 12 H1.5 Q0.5 12 0.5 11 Z" fill="#e9b93a"/><path d="M0.5 5 H13.5 V11 Q13.5 12 12.5 12 H1.5 Q0.5 12 0.5 11 Z" fill="#f7d667"/></svg>
<div class="sb" style="left:40.5px;top:289.9px"><span class="f" style="letter-spacing:-0.718px">2025-09</span></div>
<svg style="left:22px;top:329px" width="14" height="14" viewBox="0 0 14 14"><rect x="0.5" y="1.5" width="13" height="8.6" rx="0.8" fill="#2a9be0"/><rect x="1.5" y="2.5" width="11" height="6.6" fill="#58c0f0"/><path d="M7 10 V12 M4 12.4 H10" stroke="#4a7fa8" stroke-width="1.2"/></svg>
<div class="sb" style="left:40.5px;top:331.0px"><span class="f" style="letter-spacing:-0.744px">This PC</span></div>
<svg style="left:28px;top:349.7px" width="14" height="14" viewBox="0 0 14 14"><rect x="1" y="8.6" width="12.5" height="3.2" rx="0.6" fill="#3c4248"/><rect x="1" y="8.6" width="12.5" height="1" fill="#7d8890"/><path d="M1.2 1.6 H3.6 V4 H1.2 Z M4.2 1.6 H6.6 V4 H4.2 Z M1.2 4.6 H3.6 V7 H1.2 Z M4.2 4.6 H6.6 V7 H4.2 Z" fill="#2a8ad8"/></svg>
<div class="sb" style="left:47px;top:351.7px"><span class="f" style="letter-spacing:-0.283px">Windows (C:)</span></div>
<svg style="left:28px;top:370.3px" width="14" height="14" viewBox="0 0 14 14"><rect x="1" y="8.6" width="12.5" height="3.2" rx="0.6" fill="#3c4248"/><rect x="1" y="8.6" width="12.5" height="1" fill="#7d8890"/><path d="M1.2 1.6 H3.6 V4 H1.2 Z M4.2 1.6 H6.6 V4 H4.2 Z M1.2 4.6 H3.6 V7 H1.2 Z M4.2 4.6 H6.6 V7 H4.2 Z" fill="#2a8ad8"/></svg>
<div class="sb" style="left:47px;top:372.3px"><span class="f" style="letter-spacing:-0.399px">DATA (D:)</span></div>
<!--DLG-CONTENT-->
<div class="abs" style="left:798px;top:100px;width:14px;height:275px;background:#f3f3f3"></div>
<div class="abs" style="left:803.5px;top:115px;width:2px;height:112px;background:#7a7a7a;border-radius:1px"></div>
<svg style="left:143px;top:113px" width="9" height="6" viewBox="0 0 9 6"><path d="M0.5 0.5 L4.5 4.8 L8.5 0.5" stroke="#8a8f99" stroke-width="1" fill="none"/></svg>
<div class="t" style="left:156px;top:108.5px;font-size:13.2px;color:#3f4a63"><span class="f" style="letter-spacing:-0.241px">Today</span></div>
<svg style="left:143px;top:265.5px" width="9" height="6" viewBox="0 0 9 6"><path d="M0.5 0.5 L4.5 4.8 L8.5 0.5" stroke="#8a8f99" stroke-width="1" fill="none"/></svg>
<div class="t" style="left:156px;top:261px;font-size:13.2px;color:#3f4a63"><span class="f" style="letter-spacing:-0.464px">Yesterday</span></div>
<svg style="left:155px;top:172px" width="78" height="38" viewBox="0 0 78 38"><rect width="78" height="38" fill="#1c1c1c"/><rect width="78" height="4" fill="#101010"/><rect width="11" height="38" fill="#131313"/><rect x="13" y="7" width="60" height="1" fill="#2c2c2c"/><rect x="13" y="11" width="8" height="1" fill="#3a3a3a"/></svg>
<svg style="left:247px;top:172px" width="78" height="38" viewBox="0 0 78 38"><rect width="78" height="38" fill="#131314"/><rect width="78" height="4" fill="#0d0d0d"/><rect x="5" y="10" width="6" height="10" fill="#f2f2f2"/><rect x="11.5" y="10" width="9" height="10" fill="#4a9a9a"/><rect x="21" y="10" width="14" height="10" fill="#d8eeee"/><rect x="36" y="13" width="22" height="6" fill="#0a0a0a"/><rect x="25" y="24" width="10" height="1.5" fill="#2a2a2a"/><rect x="40" y="24" width="14" height="1.5" fill="#2a2a2a"/><rect x="32" y="30" width="10" height="2" fill="#2c2c2c"/></svg>
<svg style="left:339px;top:172px" width="78" height="38" viewBox="0 0 78 38"><rect width="78" height="38" fill="#1a1a1a"/><rect width="78" height="4" fill="#0f0f0f"/><rect width="12" height="38" fill="#141414"/><rect x="13" y="6" width="2" height="28" fill="#2a2a2a" opacity=".7"/><rect x="28" y="18" width="9" height="1" fill="#444"/><rect x="17" y="8" width="50" height="0.6" fill="#2a2a2a"/><rect x="17" y="13" width="50" height="0.6" fill="#2a2a2a"/><rect x="17" y="23" width="50" height="0.6" fill="#2a2a2a"/><rect x="17" y="28" width="50" height="0.6" fill="#2a2a2a"/></svg>
<svg style="left:431px;top:170.5px" width="78" height="40" viewBox="0 0 78 40"><rect width="78" height="40" fill="#f6f6f6"/><rect x="0.5" y="0.5" width="77" height="39" fill="none" stroke="#e8e8e8"/><path d="M0.5 39.500 H77.500 V1" fill="none" stroke="#cccccc" stroke-width="1"/><path d="M1 40.300 H78" fill="none" stroke="#e6e6e6" stroke-width="0.8"/><rect x="2" y="3" width="6" height="1.2" fill="#c8c8c8"/><rect x="22" y="7" width="42" height="22" fill="#fdfdfd"/><path d="M2 8 H50 M2 12 H50 M2 16 H50 M2 20 H50 M2 24 H50 M2 28 H50 M2 32 H50" stroke="#ececec" stroke-width="0.8"/></svg>
<svg style="left:523px;top:170.5px" width="78" height="40" viewBox="0 0 78 40"><rect width="78" height="40" fill="#f4f4f4"/><rect x="0.5" y="0.5" width="77" height="39" fill="none" stroke="#e8e8e8"/><path d="M0.5 39.500 H77.500 V1" fill="none" stroke="#cccccc" stroke-width="1"/><path d="M1 40.300 H78" fill="none" stroke="#e6e6e6" stroke-width="0.8"/><rect x="10" y="12" width="4" height="1.6" fill="#9a9a9a"/><rect x="16" y="10" width="18" height="6" fill="#fafafa"/></svg>
<svg style="left:615px;top:170.5px" width="78" height="40" viewBox="0 0 78 40"><rect width="78" height="40" fill="#f4f4f4"/><rect x="0.5" y="0.5" width="77" height="39" fill="none" stroke="#e8e8e8"/><path d="M0.5 39.500 H77.500 V1" fill="none" stroke="#cccccc" stroke-width="1"/><path d="M1 40.300 H78" fill="none" stroke="#e6e6e6" stroke-width="0.8"/><rect x="10" y="14" width="5" height="1.6" fill="#9a9a9a"/><rect x="8" y="8" width="30" height="3" fill="#fbfbfb"/><rect x="12" y="16" width="26" height="2" fill="#fbfbfb"/></svg>
<svg style="left:707px;top:170.5px" width="78" height="40" viewBox="0 0 78 40"><rect width="78" height="40" fill="#f3f3f3"/><rect x="0.5" y="0.5" width="77" height="39" fill="none" stroke="#e8e8e8"/><path d="M0.5 39.500 H77.500 V1" fill="none" stroke="#cccccc" stroke-width="1"/><path d="M1 40.300 H78" fill="none" stroke="#e6e6e6" stroke-width="0.8"/><rect x="12" y="13" width="20" height="1.4" fill="#5a6a6a"/><rect x="10" y="8" width="32" height="4" fill="#fcfcfc"/><rect x="10" y="16" width="32" height="5" fill="#fcfcfc"/></svg>
<div class="lbl" style="left:148px;top:212.7px"><span class="f" style="letter-spacing:-0.429px">Shared files on</span><br><span class="f" style="letter-spacing:-0.489px">OneDrive</span></div>
<div class="lbl" style="left:240px;top:212.7px"><span class="f" style="letter-spacing:-0.270px">Uploaded photos</span><br><span class="f" style="letter-spacing:-0.375px">on OneDrive</span></div>
<div class="lbl" style="left:332px;top:212.7px"><span class="f" style="letter-spacing:-0.342px">OneDrive files on</span><br><span class="f" style="letter-spacing:-0.239px">the website</span></div>
<div class="lbl" style="left:424px;top:212.7px"><span class="f" style="letter-spacing:-0.343px">Onedrive online</span><br><span class="f" style="letter-spacing:-0.294px">storage home</span></div>
<div class="lbl" style="left:516px;top:212.7px"><span class="f" style="letter-spacing:-0.489px">OneDrive</span><br><span class="f" style="letter-spacing:0.006px">notification</span><br><span class="f" style="letter-spacing:-0.048px">configuration</span></div>
<div class="lbl" style="left:608px;top:212.7px"><span class="f" style="letter-spacing:-0.321px">OneDrive Office</span><br><span class="f" style="letter-spacing:-0.127px">file default</span><br><span class="f" style="letter-spacing:-0.302px">settings</span></div>
<div class="lbl" style="left:700px;top:212.7px"><span class="f" style="letter-spacing:-0.490px">Storage</span><br><span class="f" style="letter-spacing:-0.149px">alloaction on</span><br><span class="f" style="letter-spacing:-0.489px">OneDrive</span></div>
<svg style="left:155px;top:317.5px" width="78" height="44" viewBox="0 0 78 44"><defs><filter id="b1"><feGaussianBlur stdDeviation="0.8"/></filter></defs>
<rect width="78" height="44" fill="#6b645f"/>
<rect width="78" height="14" fill="#8a6a48"/><rect x="0" y="0" width="18" height="10" fill="#b07a30"/><rect x="62" y="0" width="16" height="16" fill="#9a7a50"/>
<path d="M0 14 H78 V44 H0 Z" fill="#4e4a49"/>
<g filter="url(#b1)"><ellipse cx="8" cy="16" rx="9" ry="3.6" fill="#e8e4e0"/><ellipse cx="8" cy="22" rx="6" ry="2.4" fill="#2a2220"/><path d="M60 10 Q66 4 78 6 V44 H64 Q58 30 60 10 Z" fill="#bdb9b7"/><rect x="68" y="36" width="8" height="6" fill="#b05060" opacity=".7"/></g>
<rect x="17" y="1" width="42" height="29" rx="1" fill="#14161c"/><rect x="19" y="3" width="38" height="24" fill="#1f6fe0"/>
<g filter="url(#b1)"><ellipse cx="38" cy="12" rx="12" ry="4" fill="#d8e8f0"/><circle cx="31" cy="12" r="2.6" fill="#e8b040"/><circle cx="45" cy="12" r="2.6" fill="#58c070"/><circle cx="38" cy="11" r="3" fill="#f4f8fc"/><path d="M22 18 L28 24 L22 24 Z" fill="#40b050"/><path d="M24 20 L30 25 L25 25 Z" fill="#e8c040"/><rect x="30" y="19" width="16" height="1.6" fill="#9cc4f4"/><rect x="33" y="22.5" width="10" height="1.8" fill="#123a90"/></g>
<path d="M17 30 H59 L61.500 39 H15 Z" fill="#17181e"/><rect x="0" y="39" width="62" height="5" fill="#4c4846"/></svg>
<svg style="left:247px;top:317.5px" width="78" height="44" viewBox="0 0 78 44"><defs><filter id="b2"><feGaussianBlur stdDeviation="0.8"/></filter></defs>
<rect width="78" height="44" fill="#6b645f"/>
<rect width="78" height="14" fill="#8a6a48"/><rect x="0" y="0" width="18" height="10" fill="#b07a30"/><rect x="62" y="0" width="16" height="16" fill="#9a7a50"/>
<path d="M0 14 H78 V44 H0 Z" fill="#4e4a49"/>
<g filter="url(#b2)"><ellipse cx="8" cy="16" rx="9" ry="3.6" fill="#e8e4e0"/><ellipse cx="8" cy="22" rx="6" ry="2.4" fill="#2a2220"/><path d="M60 10 Q66 4 78 6 V44 H64 Q58 30 60 10 Z" fill="#bdb9b7"/><rect x="68" y="36" width="8" height="6" fill="#b05060" opacity=".7"/></g>
<rect x="17" y="1" width="42" height="29" rx="1" fill="#14161c"/><rect x="19" y="3" width="38" height="24" fill="#1f6fe0"/>
<g filter="url(#b2)"><ellipse cx="38" cy="12" rx="12" ry="4" fill="#d8e8f0"/><circle cx="31" cy="12" r="2.6" fill="#e8b040"/><circle cx="45" cy="12" r="2.6" fill="#58c070"/><circle cx="38" cy="11" r="3" fill="#f4f8fc"/><rect x="30" y="19" width="16" height="1.6" fill="#9cc4f4"/><rect x="33" y="22.5" width="10" height="1.8" fill="#123a90"/></g>
<path d="M17 30 H59 L61.500 39 H15 Z" fill="#17181e"/><rect x="0" y="39" width="62" height="5" fill="#4c4846"/></svg>
<svg style="left:339px;top:304px" width="77" height="58" viewBox="0 0 77 58"><defs><filter id="b3"><feGaussianBlur stdDeviation="0.7"/></filter></defs><rect width="77" height="58" fill="#2d5ba6"/><rect y="44" width="77" height="14" fill="#264a90"/>
<rect x="6" y="12" width="60" height="36" rx="1.5" fill="#1a2244"/><g filter="url(#b3)"><rect x="8.5" y="14.5" width="55" height="31" fill="#ece2d0"/><rect x="28" y="32" width="16" height="1.6" fill="#8a8a98"/><rect x="38" y="31.4" width="8" height="2.4" fill="#4a4a5a"/><rect x="26" y="28" width="20" height="0.8" fill="#cfc6b8"/></g>
<path d="M2 48 H72 L77 58 H0 Z" fill="#141c3c"/><path d="M0 50 L6 46 L8 50 L2 56 Z" fill="#3a70c8"/><path d="M70 48 L77 46 V54 Z" fill="#3a70c8"/></svg>
<svg style="left:430px;top:304px" width="79" height="58" viewBox="0 0 79 58"><defs><filter id="b4"><feGaussianBlur stdDeviation="1.2"/></filter><linearGradient id="g4" x1="0" y1="0" x2="0" y2="1"><stop offset="0" stop-color="#cfd0d0"/><stop offset=".5" stop-color="#c4c0bc"/><stop offset="1" stop-color="#d8d8d8"/></linearGradient></defs>
<rect width="79" height="58" fill="url(#g4)"/><g filter="url(#b4)"><rect x="0" y="0" width="79" height="10" fill="#e4e4e4"/><rect x="11" y="12" width="58" height="38" fill="#6a5a50"/><rect x="13" y="14" width="54" height="32" fill="#8a5e44"/><rect x="13" y="14" width="54" height="10" fill="#7a5a48"/><rect x="30" y="30" width="18" height="1.4" fill="#3a2a20"/><rect x="8" y="50" width="64" height="6" fill="#9a9c9e"/></g>
<rect x="0" y="0" width="79" height="58" fill="none" stroke="#f4f4f4" stroke-width="4" opacity=".55"/></svg>
<svg style="left:522px;top:324.5px" width="78" height="37" viewBox="0 0 78 37"><rect width="78" height="37" fill="#fbfcfd"/><rect width="78" height="2.4" fill="#2a78b8"/><rect x="0" y="2.4" width="14" height="34.6" fill="#d4e6f6"/><rect x="0" y="0" width="1.5" height="37" fill="#7ab0dc"/><rect x="76.5" y="0" width="1.5" height="37" fill="#a8cce8"/><rect x="0" y="35.6" width="78" height="1.4" fill="#c8d8e8"/><rect x="18" y="7" width="24" height="1.4" fill="#c0c8d0"/><rect x="18" y="10" width="28" height="1" fill="#dde2e8"/><path d="M16 16 H74 M16 20 H74 M16 24 H74 M16 28 H74" stroke="#eef1f4" stroke-width="0.8"/><rect x="14" y="14" width="2" height="20" fill="#e8eef4"/></svg>
<svg style="left:614.5px;top:317.5px" width="78" height="44" viewBox="0 0 78 44"><defs><filter id="b5"><feGaussianBlur stdDeviation="0.6"/></filter></defs><rect width="78" height="44" fill="#c4b4a4"/><rect x="3" y="1" width="71" height="42" fill="#1c1c22"/><rect x="5" y="3" width="67" height="37" fill="#b4d2f0"/>
<g filter="url(#b5)"><rect x="16" y="6" width="46" height="27" rx="1.5" fill="#0c1016"/><path d="M18 9 H40 M18 12 H50 M22 15 H56 M18 19 H46 M18 22 H34 M18 26 H54" stroke="#8a949c" stroke-width="0.8"/><rect x="16" y="33" width="46" height="6" fill="#1c5cd0"/><rect x="28" y="34" width="20" height="3.6" fill="#3a80f0"/><rect x="5" y="38" width="67" height="3" fill="#d8e8f8"/></g><rect x="72" y="18" width="3" height="8" fill="#5a2a2a"/></svg>
<svg style="left:706.5px;top:316.5px" width="78" height="45" viewBox="0 0 78 45"><rect width="78" height="45" fill="#1e1e1f"/><rect width="78" height="3" fill="#161616"/><rect x="70" y="1" width="6" height="2" fill="#9aa84a"/><rect x="4" y="4" width="70" height="0.6" fill="#333"/><circle cx="25.5" cy="21.0" r="0.6" fill="#e6e6e6"/><circle cx="33.7" cy="21.2" r="1.0" fill="#e6e6e6"/><circle cx="15.6" cy="14.6" r="0.8" fill="#e6e6e6"/><circle cx="33.2" cy="20.0" r="0.6" fill="#e6e6e6"/><circle cx="27.4" cy="24.1" r="0.6" fill="#e6e6e6"/><circle cx="28.4" cy="17.2" r="0.8" fill="#e6e6e6"/><circle cx="21.6" cy="15.1" r="0.6" fill="#e6e6e6"/><circle cx="21.7" cy="17.1" r="0.8" fill="#e6e6e6"/><circle cx="38.4" cy="21.3" r="1.0" fill="#e6e6e6"/><circle cx="20.5" cy="21.4" r="1.0" fill="#e6e6e6"/><circle cx="18.6" cy="16.8" r="0.6" fill="#e6e6e6"/><circle cx="19.5" cy="16.2" r="1.0" fill="#e6e6e6"/><circle cx="34.7" cy="22.6" r="0.6" fill="#e6e6e6"/><circle cx="21.8" cy="15.8" r="1.2" fill="#e6e6e6"/><circle cx="28.1" cy="14.6" r="1.2" fill="#e6e6e6"/><circle cx="24.1" cy="21.3" r="0.8" fill="#e6e6e6"/><circle cx="25.6" cy="16.2" r="1.0" fill="#e6e6e6"/><circle cx="14.9" cy="17.7" r="1.2" fill="#e6e6e6"/><circle cx="23.0" cy="29.9" r="0.6" fill="#e6e6e6"/><circle cx="23.4" cy="18.8" r="1.0" fill="#e6e6e6"/><circle cx="31.0" cy="22.8" r="0.6" fill="#e6e6e6"/><circle cx="29.3" cy="18.6" r="1.0" fill="#e6e6e6"/><circle cx="32.0" cy="30.1" r="1.2" fill="#e6e6e6"/><circle cx="30.1" cy="24.9" r="0.6" fill="#e6e6e6"/><circle cx="38.3" cy="25.5" r="0.6" fill="#e6e6e6"/><circle cx="39.8" cy="29.3" r="1.2" fill="#e6e6e6"/><circle cx="33.1" cy="30.9" r="1.0" fill="#e6e6e6"/><circle cx="38.4" cy="27.6" r="0.8" fill="#e6e6e6"/><circle cx="30.4" cy="24.0" r="0.8" fill="#e6e6e6"/><circle cx="34.2" cy="24.9" r="0.8" fill="#e6e6e6"/><circle cx="26.9" cy="32.3" r="1.2" fill="#e6e6e6"/><circle cx="37.8" cy="29.1" r="1.0" fill="#e6e6e6"/><circle cx="39.5" cy="22.1" r="1.0" fill="#e6e6e6"/><circle cx="30.8" cy="15.7" r="1.2" fill="#e6e6e6"/><circle cx="36.2" cy="26.4" r="0.8" fill="#e6e6e6"/><circle cx="37.4" cy="31.8" r="0.6" fill="#e6e6e6"/><circle cx="56.7" cy="15.5" r="1.0" fill="#e6e6e6"/><circle cx="61.6" cy="17.2" r="1.0" fill="#e6e6e6"/><circle cx="59.3" cy="12.8" r="0.8" fill="#e6e6e6"/><circle cx="60.2" cy="10.5" r="0.6" fill="#e6e6e6"/><circle cx="54.2" cy="17.2" r="1.2" fill="#e6e6e6"/><circle cx="58.8" cy="17.4" r="1.2" fill="#e6e6e6"/><circle cx="61.0" cy="13.9" r="0.6" fill="#e6e6e6"/><circle cx="66.3" cy="14.6" r="0.6" fill="#e6e6e6"/><circle cx="61.3" cy="16.1" r="0.6" fill="#e6e6e6"/><circle cx="57.5" cy="13.0" r="1.0" fill="#e6e6e6"/><circle cx="60.8" cy="14.0" r="0.8" fill="#e6e6e6"/><circle cx="60.3" cy="13.5" r="1.0" fill="#e6e6e6"/><circle cx="67.2" cy="13.5" r="1.2" fill="#e6e6e6"/><circle cx="67.6" cy="20.4" r="1.2" fill="#e6e6e6"/><circle cx="58.6" cy="15.4" r="0.8" fill="#e6e6e6"/><circle cx="64.9" cy="17.2" r="1.0" fill="#e6e6e6"/><circle cx="55.9" cy="15.8" r="0.6" fill="#e6e6e6"/><circle cx="64.7" cy="24.5" r="1.0" fill="#e6e6e6"/><circle cx="65.0" cy="19.0" r="0.6" fill="#e6e6e6"/><circle cx="62.2" cy="11.6" r="0.6" fill="#e6e6e6"/><circle cx="61.0" cy="12.1" r="1.0" fill="#e6e6e6"/><circle cx="65.1" cy="13.0" r="0.8" fill="#e6e6e6"/><circle cx="52.9" cy="24.6" r="1.0" fill="#e6e6e6"/><circle cx="55.3" cy="21.8" r="0.8" fill="#e6e6e6"/><circle cx="59.9" cy="19.1" r="0.8" fill="#e6e6e6"/><circle cx="59.1" cy="30.4" r="0.6" fill="#e6e6e6"/><circle cx="63.3" cy="25.5" r="1.2" fill="#e6e6e6"/><circle cx="57.7" cy="32.1" r="1.0" fill="#e6e6e6"/><circle cx="51.3" cy="29.1" r="1.0" fill="#e6e6e6"/><circle cx="60.7" cy="24.9" r="0.8" fill="#e6e6e6"/><circle cx="45.6" cy="39.3" r="1.0" fill="#e6e6e6"/><circle cx="43.6" cy="40.7" r="0.6" fill="#e6e6e6"/><circle cx="36.2" cy="38.4" r="0.6" fill="#e6e6e6"/><circle cx="43.0" cy="37.1" r="1.2" fill="#e6e6e6"/><circle cx="43.3" cy="34.7" r="1.2" fill="#e6e6e6"/><circle cx="45.3" cy="36.6" r="1.0" fill="#e6e6e6"/><circle cx="74.1" cy="28.8" r="1.2" fill="#e6e6e6"/><circle cx="66.8" cy="26.1" r="0.6" fill="#e6e6e6"/><circle cx="69.8" cy="23.2" r="0.8" fill="#e6e6e6"/><circle cx="72.6" cy="25.7" r="1.2" fill="#e6e6e6"/><circle cx="70.4" cy="23.4" r="1.2" fill="#e6e6e6"/></svg>
<div class="lbl" style="left:148px;top:365.5px"><span class="f" style="letter-spacing:-0.409px">Free cloud data</span></div>
<div class="lbl" style="left:240px;top:365.5px"><span class="f" style="letter-spacing:-0.026px">icloud-website-o</span></div>
<div class="lbl" style="left:332px;top:365.5px"><span class="f" style="letter-spacing:-0.256px">unnamed (1)</span></div>
<div class="lbl" style="left:424px;top:365.5px"><span class="f" style="letter-spacing:-0.204px">unnamed</span></div>
<div class="lbl" style="left:516px;top:365.5px"><span class="f" style="letter-spacing:-0.073px">nextcloud-home</span></div>
<div class="lbl" style="left:608px;top:365.5px"><span class="f" style="letter-spacing:-0.022px">using-winget-on</span></div>
<div class="lbl" style="left:700px;top:365.5px"><span class="f" style="letter-spacing:-0.236px">ipvanish vpn</span></div>
<!--DLG-BOTTOM-->
<div class="abs" style="left:0;top:373.6px;width:812px;height:70.4px;background:linear-gradient(rgba(240,240,240,0) 0,rgba(240,240,240,.7) 1.200px,#f0f0f0 2.400px)"></div>
<div class="t" style="left:112px;top:387px;font-size:10.8px"><span class="f" style="letter-spacing:-0.481px">File name:</span></div>
<div class="box" style="left:162.5px;top:382.5px;width:461.5px;height:20px;border-color:#5fa2b8;border-radius:2px"></div>
<svg style="left:613px;top:391px" width="8" height="5" viewBox="0 0 8 5"><path d="M0.5 0.5 L4 4 L7.5 0.5" stroke="#7a7a7a" stroke-width="1" fill="none"/></svg>
<div class="box" style="left:635.5px;top:383px;width:161px;height:18.5px;border-color:#dcdcdc;border-bottom-color:#c4c4c4;border-radius:2px"></div>
<div class="t" style="left:638.5px;top:387px;font-size:10.8px"><span class="f" style="letter-spacing:-0.367px">Custom Files</span></div>
<svg style="left:785px;top:391px" width="8" height="5" viewBox="0 0 8 5"><path d="M0.5 0.5 L4 4 L7.5 0.5" stroke="#7a7a7a" stroke-width="1" fill="none"/></svg>
<div class="box" style="left:636px;top:408.3px;width:73.5px;height:19.7px;border-color:#3f8f9f;border-radius:3px;background:#fdfdfd"></div>
<div class="t" style="left:636.5px;top:413px;width:73px;text-align:center;font-size:10.8px"><span class="f" style="letter-spacing:-0.430px">Open</span></div>
<div class="box" style="left:722.8px;top:408.3px;width:73.2px;height:19.7px;border-color:#d6d6d6;border-bottom-color:#bdbdbd;border-radius:3px;background:#fdfdfd"></div>
<div class="t" style="left:723px;top:413px;width:73px;text-align:center;font-size:10.8px"><span class="f" style="letter-spacing:-0.435px">Cancel</span></div>
</div>

<!-- BOTTOM BAR -->
<div class="abs" id="bbar" style="left:687.5px;top:750px;width:274px;height:48px;border-radius:24px;background:#171717;border:1px solid #2e2e2e"></div>
<div class="abs" style="left:743px;top:755px;width:215px;height:39px;border-radius:20px;background:#060606"></div>
<div class="abs" style="left:690.5px;top:754.5px;width:39px;height:39px;border-radius:50%;background:linear-gradient(45deg,#7440f2 10%,#4a55f3 50%,#2a6cf2 90%)"></div>
<div class="t" style="left:780px;top:767px;font-size:14px;color:#d8d8d8"><span class="f" style="letter-spacing:-0.211px">Search your photos</span></div>

<!-- header icons -->
<svg style="left:697px;top:9px" width="20" height="20" viewBox="0 0 20 20" fill="none" stroke="#c4c4c4" stroke-width="1.15" stroke-linejoin="round">
<path d="M7.9 3.2 Q8.6 7.8 13.2 8.500 Q8.6 9.2 7.9 13.8 Q7.2 9.2 2.6 8.500 Q7.2 7.8 7.9 3.2 Z"/>
<path d="M14.9 12 Q15.3 14.6 17.9 15 Q15.3 15.4 14.9 18 Q14.500 15.4 11.9 15 Q14.500 14.6 14.9 12 Z"/>
</svg>
<svg style="left:754px;top:11.5px" width="17" height="17" viewBox="0 0 17 17">
<rect x="0" y="0" width="7.6" height="9.8" rx="1.2" fill="#a18af5"/>
<rect x="9.2" y="0" width="7.8" height="6" rx="1.2" fill="#7385f7"/>
<rect x="0" y="11.4" width="7.6" height="5.6" rx="1.2" fill="#8d72f0"/>
<rect x="9.2" y="7.6" width="7.8" height="9.4" rx="1.2" fill="#6a8df8"/>
</svg>
<svg style="left:808.5px;top:12.5px" width="18" height="15" viewBox="0 0 18 15" fill="none" stroke="#c4c4c4" stroke-width="1.15">
<rect x="0.6" y="0.6" width="16.8" height="13.4" rx="1"/>
<path d="M3.8 0.6 V14"/>
<rect x="7.6" y="3.2" width="6.4" height="3.4" rx="0.6"/>
</svg>
<svg style="left:863px;top:10.5px" width="19" height="18" viewBox="0 0 19 18" fill="none" stroke="#c4c4c4" stroke-width="1.15" stroke-linejoin="round">
<path d="M9.5 1 L12 6.4 L17.9 7.1 L13.5 11.1 L14.7 16.9 L9.5 14 L4.3 16.9 L5.5 11.1 L1.1 7.1 L7 6.4 Z"/>
</svg>
<svg style="left:1423.5px;top:23px" width="13" height="12.5" viewBox="0 0 13 12.5" fill="none" stroke="#8f7dfa" stroke-width="1.1" stroke-linejoin="round">
<path d="M3.2 0.6 H9.8 L12.4 4.2 L6.5 11.8 L0.6 4.2 Z" fill="#6a56e8" fill-opacity=".45"/>
<path d="M0.6 4.2 H12.4 M4.4 4.2 L6.5 11.6 L8.6 4.2 M3.2 0.6 L4.4 4.2 L6.5 0.6 L8.6 4.2 L9.8 0.6"/>
</svg>
<svg style="left:1563px;top:21.5px" width="16" height="16" viewBox="0 0 16 16" fill="none" stroke="#c8c8c8" stroke-width="1.1" stroke-linejoin="round">
<circle cx="8" cy="8" r="2.3"/>
<path d="M6.7 1 H9.3 L9.8 2.9 L11.1 3.6 L13 3 L14.4 5.3 L13 6.7 V8.3 V9.3 L14.4 10.7 L13 13 L11.1 12.4 L9.8 13.1 L9.3 15 H6.7 L6.2 13.1 L4.9 12.4 L3 13 L1.6 10.7 L3 9.3 V6.7 L1.6 5.3 L3 3 L4.9 3.6 L6.2 2.9 Z"/>
</svg>
<!-- banner icons -->
<svg style="left:119px;top:91.5px" width="14" height="14" viewBox="0 0 14 14"><circle cx="7" cy="7" r="6.7" fill="#c6c6c6"/><rect x="6.3" y="6" width="1.5" height="4.4" fill="#2a2a2a"/><circle cx="7.05" cy="4.1" r="0.95" fill="#2a2a2a"/></svg>
<svg style="left:1514px;top:93px" width="11" height="11" viewBox="0 0 11 11"><path d="M0.5 0.5 L10.5 10.5 M10.5 0.5 L0.5 10.5" stroke="#e2e2e2" stroke-width="1.1"/></svg>
<!-- gallery head icons -->
<svg style="left:427px;top:152px" width="13" height="13" viewBox="0 0 13 13" fill="none" stroke="#cfcfcf" stroke-width="1.1"><rect x="0.6" y="0.6" width="11.4" height="11.4" rx="1.8"/><path d="M0.6 3.8 H12"/><g fill="#cfcfcf" stroke="none"><circle cx="3.6" cy="6.4" r="0.75"/><circle cx="6.3" cy="6.4" r="0.75"/><circle cx="9" cy="6.4" r="0.75"/><circle cx="3.6" cy="9.2" r="0.75"/><circle cx="6.3" cy="9.2" r="0.75"/></g></svg>
<svg style="left:1340px;top:154.7px" width="14" height="9" viewBox="0 0 14 9" stroke="#dcdcdc" stroke-width="1.2" stroke-linecap="round"><path d="M0.7 0.8 H13.3 M2.8 4.3 H11.2 M5 7.8 H9"/></svg>
<svg style="left:1420.5px;top:152px" width="15" height="14" viewBox="0 0 15 14" fill="none" stroke="#dcdcdc" stroke-width="1.1"><path d="M0.5 3.2 H8 M11.4 3.2 H14.5 M0.5 10.6 H3.6 M7 10.6 H14.5"/><circle cx="9.7" cy="3.2" r="1.7"/><circle cx="5.3" cy="10.6" r="1.7"/></svg>
<svg style="left:1470px;top:158px" width="13" height="2" viewBox="0 0 13 2"><path d="M0 1 H14" stroke="#8e8e8e" stroke-width="1.1"/></svg>
<svg style="left:1517.5px;top:152px" width="14" height="14" viewBox="0 0 14 14"><path d="M0.5 7 H13.5 M7 0.5 V13.5" stroke="#d4d4d4" stroke-width="1"/></svg>
<!-- bottom icons -->
<svg style="left:702px;top:766px" width="16" height="16" viewBox="0 0 16 16"><path d="M0.5 8 H15.5 M8 0.5 V15.5" stroke="#fff" stroke-width="1.6" stroke-linecap="round"/></svg>
<svg style="left:757.5px;top:766px" width="17" height="17" viewBox="0 0 17 17" fill="none" stroke="#cfcfcf" stroke-width="1.2"><circle cx="7.2" cy="7.2" r="6"/><path d="M11.6 11.6 L16 16" stroke-linecap="round"/></svg>
</body>
</html>
